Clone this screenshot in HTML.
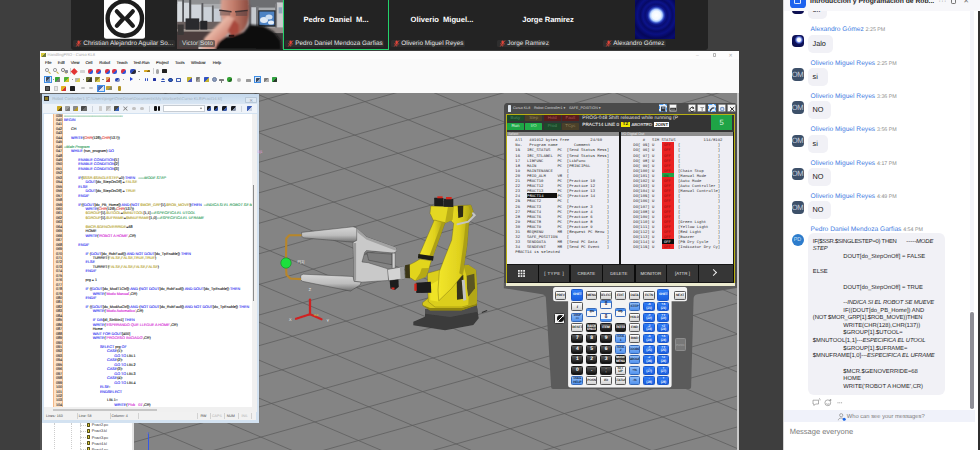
<!DOCTYPE html><html><head><meta charset="utf-8"><title>Zoom Meeting</title><style>*{box-sizing:border-box;margin:0;padding:0}
html,body{width:980px;height:450px;overflow:hidden;background:#3e3e3e}
body{font-family:"Liberation Sans",sans-serif;color:#222;text-rendering:geometricPrecision}
#root{position:relative;width:980px;height:450px;overflow:hidden;background:#3e3e3e}
.abs{position:absolute}
.nw{white-space:nowrap}
/* strip */
#strip{position:absolute;left:71px;top:0;width:637px;height:49.500px;background:#232323;border-radius:0 0 3px 3px;overflow:hidden}
.tile{position:absolute;top:0;width:106px;height:49.500px}
.tname{position:absolute;left:0;width:106px;top:14.5px;text-align:center;color:#fff;font-weight:bold;font-size:7.6px;white-space:nowrap;word-spacing:2px}
.tlab{position:absolute;left:2px;top:39.5px;height:7.5px;color:#e4e4e4;font-size:6.4px;line-height:7.5px;white-space:nowrap;padding:0 1.500px 0 10.300px;background:rgba(255,255,255,.05);border-radius:1.5px}
.mic{position:absolute;left:1.5px;top:0.5px;width:7px;height:7px}
/* shared screen */
#scr{position:absolute;left:40px;top:51px;width:699px;height:399px;background:#848484;overflow:hidden}
#chrome{position:absolute;left:0;top:0;width:100%;height:41.800px;background:#fafafa}
#ttl{position:absolute;left:0;top:0;width:100%;height:7.500px;background:#fdfdfd}
.menu{position:absolute;top:9.200px;font-size:4.100px;line-height:5px;color:#1c1c1c;white-space:nowrap;-webkit-text-stroke:.1px #1c1c1c}
.ic{position:absolute;width:4.600px;height:4.600px;border-radius:.6px;filter:blur(.3px)}
/* editor */
#ed{position:absolute;left:1.700px;top:42.600px;width:217.200px;height:329px;background:#d3e2f1;box-shadow:0 -.8px 1px rgba(0,0,0,.4)}
#edt{position:absolute;left:0;top:0;width:100%;height:10px;background:linear-gradient(#c4d8ec,#d9e6f3)}
#edtb{position:absolute;left:1.500px;top:10px;width:214px;height:9.600px;background:#eef3f9}
#code{position:absolute;left:2.600px;top:20.300px;width:207.800px;height:293.500px;background:#fff;overflow:hidden}
#gut{position:absolute;left:8.900px;top:0;width:10.300px;height:100%;background:#fde3c8;border-left:.7px solid #f3b98a;border-right:.7px solid #f3b98a}
.ln{position:absolute;left:0;height:4.450px;line-height:4.450px;font-size:3.700px;white-space:pre;color:#222;-webkit-text-stroke:.11px currentColor}
.ln i{font-style:normal}
.k{color:#2c2cf0}.s{color:#b4a22c}.m{color:#d324d3}.c{color:#2f9c5a;font-style:italic !important}.r{color:#e23232}
.num{position:absolute;left:11.700px;color:#333}
#edsb{position:absolute;left:2.600px;top:318.400px;width:212px;height:8.300px;background:#f1f1f1;font-size:3.600px;line-height:8.300px;color:#444}
#edsb span{position:absolute;top:0;white-space:nowrap}
#edsb b{position:absolute;top:1px;width:.6px;height:6.300px;background:#d2d2d2}
/* pendant */
#pn{position:absolute;left:465.400px;top:52.400px;width:231px;height:286px}
#pn:before{content:'';position:absolute;left:-1px;top:1px;width:233px;height:184px;background:#4b4b4b;border-radius:2px}
#pnt{position:absolute;left:0;top:0;width:231px;height:10.600px;background:#4b4b4b;border-radius:1.500px 1.500px 0 0;color:#d8d8d8;font-size:3.650px;line-height:10.600px;white-space:nowrap}
.pb{position:absolute;top:.9px;width:8.400px;height:8.200px;background:#f6f6f6;border-radius:1.300px;border:.5px solid #8a8a8a}
.pb.hl{border:.8px dashed #4f9df0;background:#e6effa}
#pscr{position:absolute;left:1px;top:10.600px;width:229px;height:171.800px;background:#161616;border:1px solid #b9b014}
.sb{position:absolute;width:16.600px;height:6.200px;font-size:4.300px;line-height:6.200px;text-align:center;white-space:nowrap;border-radius:.5px}
.pm{position:absolute;color:#f2f2f2;font-size:4.900px;line-height:6px;white-space:nowrap;font-weight:bold}
.pp{position:absolute;top:17.300px;height:131.300px;background:#eeeef4;overflow:hidden}
.ph{position:absolute;left:0;top:0;width:100%;height:4.200px;background:#8e8e8e;color:#ececec;font-size:3.600px;line-height:4.200px;white-space:nowrap;padding-left:.8px}
.pr{position:absolute;font-family:"Liberation Mono",monospace;font-size:3.920px;line-height:5.100px;height:5.100px;white-space:pre;color:#2a2a2a}
.sk{position:absolute;top:0;height:17.200px;background:#363636;color:#e4e4e4;font-size:4.400px;line-height:17.200px;text-align:center;white-space:nowrap}
.key{position:absolute;width:11.600px;height:8.800px;border-radius:1.300px;font-size:3.300px;line-height:3.300px;text-align:center;white-space:nowrap;overflow:hidden;display:flex;align-items:center;justify-content:center;flex-direction:column;font-weight:bold;letter-spacing:-.15px}
.kw{background:linear-gradient(#ffffff,#d4d4d4);border:.8px solid #585858;color:#1c1c1c}
.kd{background:linear-gradient(#5a5a5a,#101010);border:.6px solid #1c1c1c;color:#fff}
.kb{background:linear-gradient(#2f7cf6,#1a5fe0);border:.5px solid #1c58c8;color:#fff}
.kl{background:linear-gradient(#8fbdf8,#5393ee);border:.6px solid #3468b8;color:#0e223e}
/* chat */
#chat{position:absolute;left:783px;top:0;width:197px;height:450px;background:#fff;overflow:hidden}
.cn{position:absolute;left:27.600px;height:8px;line-height:8px;font-size:6.650px;color:#3f7de2;white-space:nowrap}
.cn span{font-size:5.300px;color:#8a8a8a;margin-left:1.800px}
.cb{position:absolute;left:24.800px;height:18.100px;border-radius:5px;background:#f1f1f6;font-size:7.300px;line-height:18.100px;padding:0 4.700px;color:#222;white-space:nowrap}
.av{position:absolute;left:8.700px;width:12.700px;height:12.500px;border-radius:3.800px;background:#3d5069;color:#c9d2df;font-size:7.600px;line-height:12.500px;padding-top:.6px;text-indent:-1px;text-align:center;overflow:hidden;letter-spacing:-.35px}
.avx{background:radial-gradient(circle at 58% 40%,#fff 0,#eef4ff 1.800px,#5a74d8 3px,#10145e 4.300px,#0a0c48 9px)}
.ml{position:absolute;left:29.800px;height:7.650px;line-height:7.650px;font-size:5.850px;color:#1e1e1e;white-space:pre}
.ml i{font-style:italic;letter-spacing:-.1px}
</style></head><body><div id="root">
<div id="strip">
<div class="tile" style="left:0"><svg class="abs" style="left:33px;top:-3px" width="41" height="42" viewBox="0 0 41 42"><rect x="0" y="0" width="41" height="41.700" rx="2.500" fill="#fff"/><circle cx="20.800" cy="21.500" r="17.200" fill="none" stroke="#1d1d1d" stroke-width="4.400"/><path d="M12.800 14.300L19.400 21.500L12.800 28.800M28.800 14.300L22.300 21.500L28.900 28.800" fill="none" stroke="#1d1d1d" stroke-width="4.200" stroke-linecap="round" stroke-linejoin="round"/></svg><div class="tlab" style=""><svg class="mic" viewBox="0 0 14 14"><rect x="5" y="1" width="4.4" height="7.5" rx="2.2" fill="#e0453a"/><path d="M3 6.5c0 5 8.4 5 8.400 0M7.200 10.500v2.500" stroke="#e0453a" stroke-width="1.300" fill="none"/><path d="M12 1L2.500 13" stroke="#e0453a" stroke-width="1.600"/></svg>Christian Alejandro Aguilar So...</div></div>
<div class="tile" style="left:106px;overflow:hidden" id="vid">
<svg class="abs" style="left:0;top:0" width="106" height="49" viewBox="0 0 106 49">
<defs><filter id="b1" x="-20%" y="-20%" width="140%" height="140%"><feGaussianBlur stdDeviation="1.1"/></filter>
<filter id="b2" x="-20%" y="-20%" width="140%" height="140%"><feGaussianBlur stdDeviation="0.5"/></filter>
<filter id="b3" x="-20%" y="-20%" width="140%" height="140%"><feGaussianBlur stdDeviation="2"/></filter>
<linearGradient id="skin" x1="0" y1="0" x2="1" y2="0"><stop offset="0" stop-color="#d9a292"/><stop offset=".45" stop-color="#c27c6b"/><stop offset="1" stop-color="#8a4a3e"/></linearGradient>
<linearGradient id="hand" x1="0" y1="0" x2="1" y2="1"><stop offset="0" stop-color="#f6e4dc"/><stop offset=".4" stop-color="#e9b9a8"/><stop offset="1" stop-color="#b04a3b"/></linearGradient></defs>
<rect width="106" height="49" fill="#a9abae"/>
<g filter="url(#b2)">
<rect x="0.0" y="0.0" width="71.6" height="3.9" fill="#8f9092" />
<rect x="71.6" y="0.0" width="34.3" height="7.6" fill="#6d6e71" />
<rect x="0.6" y="1.5" width="4.9" height="26.9" fill="#d6dade" />
<rect x="6.7" y="2.7" width="5.5" height="22.4" fill="#d3d7dc" />
<rect x="14.1" y="4.9" width="10.4" height="19.0" fill="#cfd4da" />
<rect x="26.3" y="7.1" width="8.6" height="15.6" fill="#cbd1d8" />
<rect x="36.7" y="8.6" width="7.0" height="12.9" fill="#c6ccd4" />
<rect x="5.3" y="0.0" width="1.6" height="29.4" fill="#4a4b4f" />
<rect x="12.2" y="0.0" width="2.0" height="28.8" fill="#47484c" />
<rect x="24.5" y="3.1" width="1.8" height="24.5" fill="#55565a" />
<rect x="34.9" y="5.5" width="1.8" height="19.6" fill="#5f6064" />
<rect x="0.0" y="21.8" width="44.7" height="10.0" fill="#6a605e" />
<rect x="0.0" y="29.1" width="42.2" height="2.9" fill="#a49994" />
<rect x="0.0" y="31.6" width="42.2" height="17.4" fill="#4b3e3c" />
<rect x="8.6" y="18.4" width="13.6" height="11.3" fill="#292a2e" />
<rect x="23.3" y="20.8" width="7.0" height="8.8" fill="#26272c" />
<rect x="0.6" y="24.5" width="6.1" height="10.4" fill="#3a3839" />
<rect x="72.9" y="7.3" width="8.1" height="18.6" fill="#c5c9ce" />
<rect x="71.6" y="4.9" width="2.7" height="24.5" fill="#68696d" />
<rect x="79.0" y="6.1" width="2.7" height="22.3" fill="#77787c" />
<rect x="99.8" y="2.4" width="6.1" height="25.1" fill="#c9cacd" />
<rect x="98.0" y="3.7" width="2.1" height="24.7" fill="#7b7c80" />
<rect x="101.6" y="7.3" width="3.7" height="6.1" fill="#8fa3b8" />
<rect x="81.2" y="10.3" width="17.4" height="16.4" fill="#24272d" />
<rect x="82.4" y="11.5" width="14.9" height="13.7" fill="#4d83c4" />
<ellipse cx="87" cy="20" rx="4" ry="3" fill="#dfe9f5"/><ellipse cx="92" cy="17" rx="3.500" ry="2.500" fill="#cfdff2"/><ellipse cx="94" cy="22.500" rx="3" ry="2" fill="#e6eef8"/>
<rect x="71.6" y="27.5" width="34.3" height="7.3" fill="#938b89" />
<rect x="79.0" y="33.1" width="26.9" height="15.9" fill="#3b3838" />
<rect x="21.4" y="40.2" width="18.4" height="8.8" fill="#c9c3c2" />
</g><g filter="url(#b1)">
<path d="M44.1 -1.2 L43.5 12.2 C44.7 23.3 50.8 32.4 59.4 33.7 C68.0 33.1 72.9 22.0 72.2 7.3 L71.6 -1.2 Z" fill="url(#skin)"/>
<polygon points="27.5,38.0 39.8,25.7 50.6,15.7 57.5,18.4 55.1,29.4 49.0,35.8 42.2,41.0 37.3,49.0 23.9,49.0" fill="url(#hand)" />
<polygon points="50.8,30.6 56.9,19.6 61.8,24.5 61.8,33.1 54.5,36.7" fill="#a94a3c" />
<polygon points="37.3,50.0 42.2,41.6 48.4,37.0 56.9,35.8 66.7,32.1 72.9,24.5 86.3,26.0 96.4,31.6 103.5,40.4 104.4,50.0" fill="#0e0e10" />
</g><g filter="url(#b2)">
<path d="M42.2 10.3 L54.5 11.8 M58.2 11.8 L70.7 10.5" stroke="#3c2e2e" stroke-width="1.500" fill="none"/>
<rect x="42.9" y="11.3" width="10.4" height="4.2" fill="#6d5553" opacity=".55"/>
<rect x="58.8" y="11.5" width="11.4" height="4.4" fill="#5d4644" opacity=".6"/>
<rect x="51.8" y="34.8" width="5.4" height="2.0" fill="#2a1414" />
</g></svg>
<div class="tlab" style="left:2px;padding-left:3px;background:rgba(70,70,70,.72);color:#ddd">Victor Soto</div>
</div>
<div class="tile" style="left:212px"><div class="abs" style="left:0;top:-1.500px;width:106px;height:51px;border:1.100px solid #23d16a"></div><div class="tname">Pedro Daniel M...</div><div class="tlab" style=""><svg class="mic" viewBox="0 0 14 14"><rect x="5" y="1" width="4.4" height="7.5" rx="2.2" fill="#e0453a"/><path d="M3 6.5c0 5 8.4 5 8.400 0M7.200 10.500v2.500" stroke="#e0453a" stroke-width="1.300" fill="none"/><path d="M12 1L2.500 13" stroke="#e0453a" stroke-width="1.600"/></svg>Pedro Daniel Mendoza Garfias</div></div>
<div class="tile" style="left:318px"><div class="tname">Oliverio Miguel...</div><div class="tlab" style=""><svg class="mic" viewBox="0 0 14 14"><rect x="5" y="1" width="4.4" height="7.5" rx="2.2" fill="#e0453a"/><path d="M3 6.5c0 5 8.4 5 8.400 0M7.200 10.500v2.500" stroke="#e0453a" stroke-width="1.300" fill="none"/><path d="M12 1L2.500 13" stroke="#e0453a" stroke-width="1.600"/></svg>Oliverio Miguel Reyes</div></div>
<div class="tile" style="left:424px"><div class="tname" style="word-spacing:.3px;letter-spacing:-.1px">Jorge Ramirez</div><div class="tlab" style=""><svg class="mic" viewBox="0 0 14 14"><rect x="5" y="1" width="4.4" height="7.5" rx="2.2" fill="#e0453a"/><path d="M3 6.5c0 5 8.4 5 8.400 0M7.200 10.500v2.500" stroke="#e0453a" stroke-width="1.300" fill="none"/><path d="M12 1L2.500 13" stroke="#e0453a" stroke-width="1.600"/></svg>Jorge Ramirez</div></div>
<div class="tile" style="left:530px"><div class="abs" style="left:34px;top:0;width:40px;height:39px;background:radial-gradient(circle at 21.300px 15.300px,#ffffff 0,#f0f7ff 4.300px,#b4d0ff 6px,#3a55c8 7.600px,#101a92 9px,#090d74 11px,#0c138a 13.500px,#070a66 16px,#0a1082 19px,#05075a 23px,#080c72 27px,#04054c 32px)"></div><div class="tlab" style=""><svg class="mic" viewBox="0 0 14 14"><rect x="5" y="1" width="4.4" height="7.5" rx="2.2" fill="#e0453a"/><path d="M3 6.5c0 5 8.4 5 8.400 0M7.200 10.500v2.500" stroke="#e0453a" stroke-width="1.300" fill="none"/><path d="M12 1L2.500 13" stroke="#e0453a" stroke-width="1.600"/></svg>Alexandro Gómez</div></div>
</div>
<div id="scr">
<svg class="abs" style="left:0;top:0" width="699.500" height="399" viewBox="40 51 699.500 399"><g stroke="#585858" stroke-width=".75" opacity=".9"><line x1="459.8" y1="-199.1" x2="-290.1" y2="16.6"/><line x1="550.5" y1="-194.8" x2="-294.3" y2="47.8"/><line x1="665.2" y1="-197.3" x2="-298.5" y2="79.1"/><line x1="780.3" y1="-199.9" x2="-279.4" y2="103.8"/><line x1="848.0" y1="-188.8" x2="-283.6" y2="135.1"/><line x1="892.0" y1="-170.8" x2="-287.8" y2="166.5"/><line x1="936.1" y1="-152.8" x2="-292.0" y2="197.8"/><line x1="980.2" y1="-134.8" x2="-296.2" y2="229.3"/><line x1="1024.4" y1="-116.7" x2="-277.1" y2="254.1"/><line x1="1068.7" y1="-98.6" x2="-281.3" y2="285.5"/><line x1="1113.0" y1="-80.4" x2="-285.5" y2="317.0"/><line x1="1157.5" y1="-62.3" x2="-243.0" y2="335.3"/><line x1="1202.0" y1="-44.1" x2="-200.4" y2="353.5"/><line x1="1246.6" y1="-25.8" x2="-157.8" y2="371.8"/><line x1="1291.3" y1="-7.6" x2="-115.0" y2="390.2"/><line x1="1287.6" y1="24.4" x2="-72.2" y2="408.6"/><line x1="1283.9" y1="56.5" x2="-29.3" y2="427.0"/><line x1="1280.2" y1="88.5" x2="13.7" y2="445.4"/><line x1="1276.5" y1="120.6" x2="56.7" y2="463.9"/><line x1="1297.1" y1="145.8" x2="99.8" y2="482.4"/><line x1="1293.4" y1="178.0" x2="143.1" y2="501.0"/><line x1="1289.7" y1="210.1" x2="186.3" y2="519.6"/><line x1="1286.0" y1="242.3" x2="229.7" y2="538.2"/><line x1="1282.3" y1="274.5" x2="273.1" y2="556.8"/><line x1="1278.6" y1="306.7" x2="316.7" y2="575.5"/><line x1="1299.2" y1="332.2" x2="360.3" y2="594.2"/><line x1="1295.5" y1="364.4" x2="403.9" y2="613.0"/><line x1="1291.8" y1="396.7" x2="447.7" y2="631.8"/><line x1="1288.1" y1="429.1" x2="491.5" y2="650.6"/><line x1="1284.4" y1="461.4" x2="535.4" y2="669.4"/><line x1="1280.7" y1="493.8" x2="579.4" y2="688.3"/><line x1="1277.0" y1="526.2" x2="623.5" y2="707.2"/><line x1="832.5" y1="-195.1" x2="1299.2" y2="-4.3"/><line x1="742.9" y1="-194.2" x2="1298.7" y2="33.5"/><line x1="653.5" y1="-193.2" x2="1298.1" y2="71.3"/><line x1="546.8" y1="-199.5" x2="1297.5" y2="109.2"/><line x1="458.0" y1="-198.5" x2="1296.9" y2="147.1"/><line x1="404.4" y1="-183.1" x2="1296.4" y2="185.0"/><line x1="350.9" y1="-167.7" x2="1295.8" y2="223.0"/><line x1="297.4" y1="-152.4" x2="1295.2" y2="261.0"/><line x1="244.0" y1="-137.0" x2="1294.6" y2="299.1"/><line x1="190.7" y1="-121.7" x2="1294.1" y2="337.2"/><line x1="137.4" y1="-106.4" x2="1293.5" y2="375.3"/><line x1="84.2" y1="-91.1" x2="1292.9" y2="413.5"/><line x1="31.1" y1="-75.8" x2="1292.3" y2="451.7"/><line x1="-22.0" y1="-60.5" x2="1291.7" y2="489.9"/><line x1="-75.0" y1="-45.3" x2="1291.2" y2="528.2"/><line x1="-128.0" y1="-30.0" x2="1272.3" y2="558.9"/><line x1="-180.9" y1="-14.8" x2="1217.0" y2="574.2"/><line x1="-233.7" y1="0.4" x2="1161.8" y2="589.5"/><line x1="-286.5" y1="15.5" x2="1106.6" y2="604.7"/><line x1="-287.8" y1="52.5" x2="1051.5" y2="620.0"/><line x1="-289.2" y1="89.4" x2="996.5" y2="635.2"/><line x1="-290.5" y1="126.4" x2="941.5" y2="650.4"/><line x1="-291.9" y1="163.4" x2="886.6" y2="665.6"/><line x1="-293.3" y1="200.5" x2="831.8" y2="680.8"/><line x1="-294.6" y1="237.6" x2="777.0" y2="695.9"/><line x1="-296.0" y1="274.7" x2="722.3" y2="711.1"/><line x1="-297.3" y1="311.9" x2="667.7" y2="726.2"/><line x1="-298.7" y1="349.1" x2="613.1" y2="741.3"/></g></svg>
<div id="chrome"><div id="ttl"><div class="abs" style="left:1.200px;top:1.800px;width:4.400px;height:4.400px;background:linear-gradient(135deg,#d8c93a 50%,#6f7a3a 50%)"></div><div class="abs nw" style="left:7.500px;top:1.300px;font-size:4.050px;line-height:5px;color:#a9a9a9">HandlingPRO - Curso KL8</div><div class="abs nw" style="left:656px;top:1.500px;font-size:5px;line-height:7px;color:#b5b5b5;letter-spacing:0">–</div><div class="abs" style="left:672.500px;top:2.300px;width:3.500px;height:3.300px;border:.6px solid #b5b5b5;border-radius:.8px"></div><div class="abs nw" style="left:688.500px;top:1.600px;font-size:5px;line-height:7px;color:#b0b0b0">✕</div></div>
<div class="menu" style="left:4.9px">File</div>
<div class="menu" style="left:17.7px">Edit</div>
<div class="menu" style="left:30.7px">View</div>
<div class="menu" style="left:45.4px">Cell</div>
<div class="menu" style="left:59.3px">Robot</div>
<div class="menu" style="left:76.6px">Teach</div>
<div class="menu" style="left:93.2px">Test-Run</div>
<div class="menu" style="left:116.0px">Project</div>
<div class="menu" style="left:134.9px">Tools</div>
<div class="menu" style="left:151.0px">Window</div>
<div class="menu" style="left:172.7px">Help</div>
<div class="ic" style="left:5.3px;top:17.2px;width:3.600px;height:3.600px;border-radius:50%;border:.8px solid #8a8a8a"></div>
<div class="ic" style="left:8.1px;top:20.9px;width:2.600px;height:1.200px;background:#c9b13e;transform:rotate(45deg)"></div>
<div class="ic" style="left:13.3px;top:17.2px;width:3.600px;height:3.600px;border-radius:50%;border:.8px solid #8a8a8a"></div>
<div class="ic" style="left:16.1px;top:20.9px;width:2.600px;height:1.200px;background:#c9b13e;transform:rotate(45deg)"></div>
<div class="ic" style="left:21.3px;top:17.2px;width:3.600px;height:3.600px;border-radius:50%;border:.8px solid #6f6f6f"></div>
<div class="ic" style="left:24.1px;top:20.9px;width:2.600px;height:1.200px;background:#c9b13e;transform:rotate(45deg)"></div>
<div class="ic" style="left:24.5px;top:19.3px;width:3.0px;height:3.0px;background:#8a8f99;"></div>
<div class="abs" style="left:29.800px;top:17px;width:.5px;height:6px;background:#d0d0d0"></div>
<div class="ic" style="left:32.2px;top:17.7px;width:4.6px;height:4.6px;background:#e23434;transform:rotate(45deg)"></div>
<div class="ic" style="left:39.9px;top:18.5px;width:5.0px;height:3.0px;background:#d4d4d4;"></div>
<div class="ic" style="left:47.9px;top:17.5px;width:5.0px;height:5.0px;background:linear-gradient(135deg,#d63246 52%,#3456d6 52%);border-radius:2px"></div>
<div class="ic" style="left:55.8px;top:17.5px;width:5.0px;height:5.0px;background:linear-gradient(135deg,#d63246 52%,#3456d6 52%);border-radius:2px"></div>
<div class="ic" style="left:64.5px;top:17.5px;width:5.0px;height:5.0px;background:linear-gradient(135deg,#d63246 52%,#3456d6 52%);border-radius:2px"></div>
<div class="ic" style="left:72.4px;top:17.5px;width:5.0px;height:5.0px;background:linear-gradient(135deg,#d63246 52%,#3456d6 52%);border-radius:2px"></div>
<div class="ic" style="left:81.0px;top:17.5px;width:5.0px;height:5.0px;background:linear-gradient(135deg,#d63246 52%,#3456d6 52%);border-radius:2px"></div>
<div class="ic" style="left:90.0px;top:17.5px;width:5.6px;height:5.0px;background:linear-gradient(135deg,#2b48b8 52%,#2a2a3a 52%);border-radius:2px"></div>
<div class="ic" style="left:98.2px;top:20.0px;width:1.6px;height:1.0px;background:#666;"></div>
<div class="ic" style="left:103.7px;top:18.9px;width:6.2px;height:2.6px;background:linear-gradient(135deg,#d9a822 52%,#8a6a10 52%);"></div>
<div class="abs" style="left:112.500px;top:17px;width:.5px;height:6px;background:#d0d0d0"></div>
<div class="ic" style="left:115.7px;top:17.5px;width:3.4px;height:5.0px;background:#a4a4a4;border-radius:1.600px"></div>
<div class="ic" style="left:122.0px;top:18.2px;width:5.4px;height:4.2px;background:#222;"></div>
<div class="abs" style="left:4.2px;top:25.2px;width:7.4px;height:7.200px;border:.7px solid #3f8ee6;background:rgba(120,175,245,.22)"></div>
<div class="ic" style="left:6.1px;top:26.2px;width:3.6px;height:5.2px;background:linear-gradient(135deg,#3b4a5e 52%,#6f8fb8 52%);"></div>
<div class="ic" style="left:12.7px;top:28.4px;width:1.4px;height:0.8px;background:#777;"></div>
<div class="ic" style="left:15.4px;top:26.3px;width:5.0px;height:5.0px;background:linear-gradient(135deg,#35a535 52%,#7a7a7a 52%);"></div>
<div class="ic" style="left:24.0px;top:26.3px;width:5.0px;height:5.0px;background:linear-gradient(135deg,#4fb235 52%,#cfc324 52%);"></div>
<div class="ic" style="left:31.6px;top:28.4px;width:1.4px;height:0.8px;background:#777;"></div>
<div class="ic" style="left:35.1px;top:26.5px;width:5.4px;height:4.6px;background:linear-gradient(135deg,#b7b7a6 52%,#d8cc50 52%);"></div>
<div class="ic" style="left:42.6px;top:28.4px;width:1.4px;height:0.8px;background:#777;"></div>
<div class="ic" style="left:46.3px;top:26.2px;width:5.4px;height:5.2px;background:linear-gradient(135deg,#6b6b31 52%,#3a3a2a 52%);"></div>
<div class="ic" style="left:55.0px;top:26.2px;width:5.4px;height:5.2px;background:linear-gradient(135deg,#8b8131 52%,#d2c444 52%);"></div>
<div class="ic" style="left:62.3px;top:28.4px;width:1.4px;height:0.8px;background:#777;"></div>
<div class="ic" style="left:66.4px;top:26.2px;width:3.8px;height:5.2px;background:linear-gradient(135deg,#e2a252 52%,#c43a3a 52%);"></div>
<div class="ic" style="left:74.9px;top:26.6px;width:5.4px;height:4.4px;background:linear-gradient(135deg,#2342b4 52%,#7a8ac0 52%);border-radius:2px"></div>
<div class="ic" style="left:83.1px;top:28.4px;width:1.4px;height:0.8px;background:#777;"></div>
<div class="abs" style="left:90px;top:26.400px;width:0;height:0;border-left:3.400px solid #2444d4;border-top:2.400px solid transparent;border-bottom:2.400px solid transparent"></div>
<div class="ic" style="left:98.6px;top:28.4px;width:1.4px;height:0.8px;background:#777;"></div>
<div class="ic" style="left:104.7px;top:27.1px;width:1.0px;height:3.4px;background:#3252c2;"></div>
<div class="ic" style="left:106.5px;top:27.1px;width:1.0px;height:3.4px;background:#3252c2;"></div>
<div class="ic" style="left:112.8px;top:27.1px;width:3.2px;height:3.4px;background:#2232a2;"></div>
<div class="ic" style="left:120.6px;top:29.5px;width:4.2px;height:1.2px;background:#3252b2;"></div>
<div class="abs" style="left:120.600px;top:26.600px;width:0;height:0;border-bottom:2.600px solid #3252b2;border-left:2.100px solid transparent;border-right:2.100px solid transparent"></div>
<div class="ic" style="left:128.4px;top:26.5px;width:4.6px;height:4.6px;background:#2f5fc1;border-radius:50%;border:1px solid #223f8f"></div>
<div class="ic" style="left:136.3px;top:26.5px;width:5.2px;height:4.6px;background:#f4f6fb;border:.8px solid #3f5fb1;border-top-width:1.600px"></div>
<div class="ic" style="left:146.7px;top:26.2px;width:5.2px;height:5.2px;background:linear-gradient(135deg,#c2b232 52%,#4252c2 52%);"></div>
<div class="ic" style="left:155.6px;top:26.2px;width:4.4px;height:5.2px;background:linear-gradient(135deg,#7a7a7a 52%,#a0a0a0 52%);"></div>
<div class="ic" style="left:163.5px;top:26.2px;width:5.0px;height:5.2px;background:linear-gradient(135deg,#3252c2 52%,#c2b232 52%);"></div>
<div class="ic" style="left:171.5px;top:26.3px;width:5.0px;height:5.0px;background:#8a9bbd;border-radius:50%;border:.8px solid #6a7a9a"></div>
<div class="ic" style="left:179.1px;top:27.7px;width:5.0px;height:2.2px;background:#7a7a7a;"></div>
<div class="ic" style="left:180.9px;top:28.8px;width:1.4px;height:3.0px;background:#7a7a7a;"></div>
<div class="ic" style="left:187.1px;top:26.3px;width:5.0px;height:5.0px;background:linear-gradient(135deg,#32a232 52%,#1f6f1f 52%);border-radius:2px"></div>
<div class="ic" style="left:196.9px;top:26.8px;width:4.0px;height:4.0px;background:#b9b9b9;border-radius:50%"></div>
<div class="ic" style="left:205.7px;top:27.7px;width:5.0px;height:3.4px;background:#9a9a9a;"></div>
<div class="abs" style="left:214.1px;top:25.2px;width:7.4px;height:7.200px;border:.7px solid #3f8ee6;background:rgba(120,175,245,.22)"></div>
<div class="ic" style="left:215.5px;top:26.5px;width:4.6px;height:4.6px;background:linear-gradient(135deg,#3b4a5e 52%,#8fa4c4 52%);"></div>
<div class="ic" style="left:223.5px;top:26.8px;width:5.0px;height:4.0px;background:linear-gradient(135deg,#7b7b7b 52%,#b0b0b0 52%);"></div>
<div class="ic" style="left:231.9px;top:26.3px;width:5.0px;height:5.0px;background:linear-gradient(135deg,#32a242 52%,#2a3a2a 52%);"></div>
<div class="ic" style="left:5.3px;top:34.6px;width:5.2px;height:5.2px;background:#5a5a5a;border:.8px solid #333"></div>
<div class="ic" style="left:13.9px;top:34.6px;width:4.0px;height:5.2px;background:#e6e6e6;border:.5px solid #c6c6c6"></div>
<div class="ic" style="left:21.3px;top:34.7px;width:5.2px;height:5.0px;background:linear-gradient(135deg,#e2b222 52%,#d43434 52%);"></div>
<div class="ic" style="left:30.0px;top:34.7px;width:5.0px;height:5.0px;background:#1f1f1f;"></div>
<div class="ic" style="left:41.1px;top:36.0px;width:4.0px;height:2.4px;background:#c4c4c4;border-radius:2px"></div>
<div class="ic" style="left:49.0px;top:36.0px;width:4.0px;height:2.4px;background:#c4c4c4;border-radius:2px"></div>
<div class="abs" style="left:56.9px;top:33.6px;width:8.2px;height:7.200px;border:.7px solid #3f8ee6;background:rgba(120,175,245,.22)"></div>
<div class="ic" style="left:58.2px;top:34.8px;width:5.6px;height:4.8px;background:linear-gradient(135deg,#4a6ab2 52%,#e0e6f0 52%);"></div>
<div class="ic" style="left:66.3px;top:35.0px;width:5.4px;height:4.4px;background:linear-gradient(135deg,#c2a232 52%,#8a8a6a 52%);"></div>
<div class="ic" style="left:78.4px;top:34.6px;width:2.4px;height:5.2px;background:#b29222;border-radius:1px"></div>
</div>
<div class="abs" style="left:697px;top:41.800px;width:2px;height:358px;background:#c9c9c9"></div>
<div class="abs" style="left:0;top:41.800px;width:2.200px;height:358px;background:#525252"></div>
<div id="ed"><div id="edt"><div class="abs" style="left:2px;top:2.200px;width:5px;height:5.500px;background:#8a7a20;border:.6px solid #333"></div><div class="abs nw" style="left:10.500px;top:2.300px;font-size:4.160px;line-height:5.500px;color:#a3b1c0">Robot Controller1 [C:\Users\jorge\OneDrive\Documents\My Workcells\Curso KL8\Pract14.kl]</div><div class="abs" style="left:203.800px;top:3px;width:11.200px;height:6.300px;background:#dde8f3;border:.5px solid #b9c9d9;border-radius:.8px;font-size:4.500px;line-height:5.300px;text-align:center;color:#8d9aa8">✕</div></div><div id="edtb">
<div class="ic" style="left:13.8px;top:2.3px;width:5.2px;height:5.2px;background:linear-gradient(135deg,#caa822 52%,#5a4a20 52%);"></div>
<div class="ic" style="left:22.1px;top:2.3px;width:5.2px;height:5.2px;background:linear-gradient(135deg,#9c9c9c 52%,#7a7a7a 52%);"></div>
<div class="ic" style="left:29.9px;top:2.3px;width:5.2px;height:5.2px;background:linear-gradient(135deg,#8a8a8a 52%,#b89a28 52%);"></div>
<div class="ic" style="left:38.3px;top:2.6px;width:5.6px;height:4.6px;background:linear-gradient(135deg,#484848 52%,#6a6a6a 52%);"></div>
<div class="ic" style="left:56.1px;top:2.4px;width:2.6px;height:5.0px;background:#cfcfcf;"></div>
<div class="ic" style="left:62.7px;top:2.3px;width:5.2px;height:5.2px;background:linear-gradient(135deg,#bdbdbd 52%,#d8d8d8 52%);"></div>
<div class="ic" style="left:71.1px;top:2.3px;width:5.2px;height:5.2px;background:linear-gradient(135deg,#4a4a42 52%,#3a62b8 52%);"></div>
<div class="ic" style="left:79.9px;top:2.6px;width:4.6px;height:4.6px;background:#808080;clip-path:polygon(0 12%,12% 0,50% 38%,88% 0,100% 12%,62% 50%,100% 88%,88% 100%,50% 62%,12% 100%,0 88%,38% 50%)"></div>
<div class="ic" style="left:88.4px;top:3.7px;width:4.0px;height:2.4px;background:#c2c2c2;border-radius:2px"></div>
<div class="ic" style="left:96.6px;top:3.7px;width:4.0px;height:2.4px;background:#c2c2c2;border-radius:2px"></div>
<div class="ic" style="left:111.3px;top:2.6px;width:2.8px;height:4.6px;background:#111;border-radius:1px"></div>
<div class="ic" style="left:114.5px;top:2.6px;width:2.8px;height:4.6px;background:#111;border-radius:1px"></div>
<div class="ic" style="left:163.4px;top:2.7px;width:4.8px;height:4.4px;background:linear-gradient(135deg,#16181e 52%,#2a4a9a 52%);border-radius:1.200px"></div>
<div class="ic" style="left:170.4px;top:2.7px;width:4.8px;height:4.4px;background:linear-gradient(135deg,#16181e 52%,#2a4a9a 52%);border-radius:1.200px"></div>
<div class="ic" style="left:178.9px;top:2.7px;width:4.8px;height:4.4px;background:linear-gradient(135deg,#16181e 52%,#3a5aa8 52%);border-radius:1.200px"></div>
<div class="ic" style="left:187.9px;top:2.7px;width:4.8px;height:4.4px;background:linear-gradient(135deg,#16181e 52%,#8a94a8 52%);border-radius:1.200px"></div>
<div class="ic" style="left:203.8px;top:2.3px;width:5.2px;height:5.2px;background:linear-gradient(135deg,#3a5ab2 52%,#c9d2e4 52%);"></div>
<div class="abs" style="left:49.1px;top:2px;width:.5px;height:6px;background:#cfd6de"></div>
<div class="abs" style="left:106.3px;top:2px;width:.5px;height:6px;background:#cfd6de"></div>
<div class="abs" style="left:198.3px;top:2px;width:.5px;height:6px;background:#cfd6de"></div>
<div class="abs" style="left:119.600px;top:1px;width:42px;height:7px;background:#fff;border:.5px solid #c6ccd3"></div>
<div class="abs" style="left:157px;top:3.600px;width:2px;height:2px;border-right:.5px solid #888;border-bottom:.5px solid #888;transform:rotate(45deg) scale(.8)"></div>
</div><div id="code"><div id="gut"></div>
<div class="ln num" style="top:-0.40px">039</div>
<div class="ln" style="top:-0.40px;left:19.6px"><i class="c">------------------------------------------------</i></div>
<div class="ln num" style="top:4.05px">040</div>
<div class="ln" style="top:4.05px;left:19.6px"><i class="k">BEGIN</i></div>
<div class="ln num" style="top:8.50px">041</div>
<div class="ln num" style="top:12.96px">042</div>
<div class="ln" style="top:12.96px;left:26.8px">CH</div>
<div class="ln num" style="top:17.41px">043</div>
<div class="ln num" style="top:21.86px">044</div>
<div class="ln" style="top:21.86px;left:26.8px"><i class="k">WRITE</i>(<i class="r">CHR</i>(128),<i class="r">CHR</i>(137))</div>
<div class="ln num" style="top:26.31px">045</div>
<div class="ln num" style="top:30.76px">046</div>
<div class="ln" style="top:30.76px;left:19.6px"><i class="c">--Main Program</i></div>
<div class="ln num" style="top:35.22px">047</div>
<div class="ln" style="top:35.22px;left:26.8px"><i class="k">WHILE</i> (run_program) <i class="k">DO</i></div>
<div class="ln num" style="top:39.67px">048</div>
<div class="ln num" style="top:44.12px">049</div>
<div class="ln" style="top:44.12px;left:34.0px"><i class="k">ENABLE CONDITION</i>[1]</div>
<div class="ln num" style="top:48.57px">050</div>
<div class="ln" style="top:48.57px;left:34.0px"><i class="k">ENABLE CONDITION</i>[2]</div>
<div class="ln num" style="top:53.02px">051</div>
<div class="ln" style="top:53.02px;left:34.0px"><i class="k">ENABLE CONDITION</i>[3]</div>
<div class="ln num" style="top:57.48px">052</div>
<div class="ln num" style="top:61.93px">053</div>
<div class="ln" style="top:61.93px;left:34.0px"><i class="k">IF</i>(<i class="s">$SSR.$SINGLESTEP</i>=0) <i class="k">THEN</i>   <i class="c">-----MODE STEP</i></div>
<div class="ln num" style="top:66.38px">054</div>
<div class="ln" style="top:66.38px;left:41.2px"><i class="k">DOUT</i>[do_StepOnOff] = <i class="s">FALSE</i></div>
<div class="ln num" style="top:70.83px">055</div>
<div class="ln" style="top:70.83px;left:34.0px"><i class="k">ELSE</i></div>
<div class="ln num" style="top:75.28px">056</div>
<div class="ln" style="top:75.28px;left:41.2px"><i class="k">DOUT</i>[do_StepOnOff] = <i class="s">TRUE</i></div>
<div class="ln num" style="top:79.74px">057</div>
<div class="ln" style="top:79.74px;left:34.0px"><i class="k">ENDIF</i></div>
<div class="ln num" style="top:84.19px">058</div>
<div class="ln num" style="top:88.64px">059</div>
<div class="ln" style="top:88.64px;left:34.0px"><i class="k">IF</i>((<i class="k">DOUT</i>[do_PB_Home]) <i class="k">AND</i> (<i class="k">NOT</i> <i class="s">$MOR_GRP</i>[1].<i class="s">$ROB_MOVE</i>))<i class="k">THEN</i>  <i class="c">--INDICA SI EL ROBOT SE MUEVE</i></div>
<div class="ln num" style="top:93.09px">060</div>
<div class="ln" style="top:93.09px;left:41.2px"><i class="k">WRITE</i>(<i class="r">CHR</i>(128),<i class="r">CHR</i>(137))</div>
<div class="ln num" style="top:97.54px">061</div>
<div class="ln" style="top:97.54px;left:41.2px"><i class="s">$GROUP</i>[1].<i class="s">$UTOOL</i>=<i class="s">$MNUTOOL</i>[1,1]<i class="c">---ESPECIFICA EL UTOOL</i></div>
<div class="ln num" style="top:102.00px">062</div>
<div class="ln" style="top:102.00px;left:41.2px"><i class="s">$GROUP</i>[1].<i class="s">$UFRAME</i>=<i class="s">$MNUFRAME</i>[1,0]<i class="c">---ESPECIFICA EL UFRAME</i></div>
<div class="ln num" style="top:106.45px">063</div>
<div class="ln num" style="top:110.90px">064</div>
<div class="ln" style="top:110.90px;left:41.2px"><i class="s">$MCR.$GENOVERRIDE</i>=68</div>
<div class="ln num" style="top:115.35px">065</div>
<div class="ln" style="top:115.35px;left:41.2px">HOME</div>
<div class="ln num" style="top:119.80px">066</div>
<div class="ln" style="top:119.80px;left:41.2px"><i class="k">WRITE</i>(<i class="m">'ROBOT A HOME'</i>,CR)</div>
<div class="ln num" style="top:124.26px">067</div>
<div class="ln num" style="top:128.71px">068</div>
<div class="ln" style="top:128.71px;left:34.0px"><i class="k">ENDIF</i></div>
<div class="ln num" style="top:133.16px">069</div>
<div class="ln num" style="top:137.61px">070</div>
<div class="ln" style="top:137.61px;left:41.2px"><i class="k">IF</i> (<i class="k">DOUT</i>[do_RobFault]) <i class="k">AND NOT DOUT</i>[do_TpEnable]) <i class="k">THEN</i></div>
<div class="ln num" style="top:142.06px">071</div>
<div class="ln" style="top:142.06px;left:48.4px">TURRET(<i class="s">FALSE,FALSE,TRUE,TRUE</i>)</div>
<div class="ln num" style="top:146.52px">072</div>
<div class="ln" style="top:146.52px;left:41.2px"><i class="k">ELSE</i></div>
<div class="ln num" style="top:150.97px">073</div>
<div class="ln" style="top:150.97px;left:48.4px">TURRET(<i class="s">FALSE,FALSE,FALSE,FALSE</i>)</div>
<div class="ln num" style="top:155.42px">074</div>
<div class="ln" style="top:155.42px;left:41.2px"><i class="k">ENDIF</i></div>
<div class="ln num" style="top:159.87px">075</div>
<div class="ln num" style="top:164.32px">076</div>
<div class="ln" style="top:164.32px;left:41.2px">prg = 1</div>
<div class="ln num" style="top:168.78px">077</div>
<div class="ln num" style="top:173.23px">078</div>
<div class="ln" style="top:173.23px;left:41.2px"><i class="k">IF</i> ((<i class="k">DOUT</i>[do_ModT1Ctrl]) <i class="k">AND</i> (<i class="k">NOT DOUT</i>[do_RobFault]) <i class="k">AND DOUT</i>[do_TpEnable]) <i class="k">THEN</i></div>
<div class="ln num" style="top:177.68px">079</div>
<div class="ln" style="top:177.68px;left:48.4px"><i class="k">WRITE</i>(<i class="m">'Modo Manual'</i>,CR)</div>
<div class="ln num" style="top:182.13px">080</div>
<div class="ln" style="top:182.13px;left:41.2px"><i class="k">ENDIF</i></div>
<div class="ln num" style="top:186.58px">081</div>
<div class="ln num" style="top:191.04px">082</div>
<div class="ln" style="top:191.04px;left:41.2px"><i class="k">IF</i> ((<i class="k">DOUT</i>[do_ModAuCtrl]) <i class="k">AND</i> (<i class="k">NOT DOUT</i>[do_RobFault]) <i class="k">AND NOT DOUT</i>[do_TpEnable]) <i class="k">THEN</i></div>
<div class="ln num" style="top:195.49px">083</div>
<div class="ln" style="top:195.49px;left:48.4px"><i class="k">WRITE</i>(<i class="m">'Modo Automatico'</i>,CR)</div>
<div class="ln num" style="top:199.94px">084</div>
<div class="ln num" style="top:204.39px">085</div>
<div class="ln" style="top:204.39px;left:48.4px"><i class="k">IF DIN</i>[di_StrtBtn1] <i class="k">THEN</i></div>
<div class="ln num" style="top:208.84px">086</div>
<div class="ln" style="top:208.84px;left:48.4px"><i class="k">WRITE</i>(<i class="m">'ESPERANDO QUE LLEGUE A HOME'</i>,CR)</div>
<div class="ln num" style="top:213.30px">087</div>
<div class="ln" style="top:213.30px;left:48.4px">Home</div>
<div class="ln num" style="top:217.75px">088</div>
<div class="ln" style="top:217.75px;left:48.4px"><i class="k">WAIT FOR DOUT</i>[400]</div>
<div class="ln num" style="top:222.20px">089</div>
<div class="ln" style="top:222.20px;left:48.4px"><i class="k">WRITE</i>(<i class="m">'PROCESO INICIADO'</i>,CR)</div>
<div class="ln num" style="top:226.65px">090</div>
<div class="ln num" style="top:231.10px">091</div>
<div class="ln" style="top:231.10px;left:55.6px"><i class="k">SELECT</i> prg <i class="k">OF</i></div>
<div class="ln num" style="top:235.56px">092</div>
<div class="ln" style="top:235.56px;left:62.8px"><i class="k">CASE</i>(1):</div>
<div class="ln num" style="top:240.01px">093</div>
<div class="ln" style="top:240.01px;left:70.0px"><i class="k">GO TO</i> LBL1</div>
<div class="ln num" style="top:244.46px">094</div>
<div class="ln" style="top:244.46px;left:62.8px"><i class="k">CASE</i>(2):</div>
<div class="ln num" style="top:248.91px">095</div>
<div class="ln" style="top:248.91px;left:70.0px"><i class="k">GO TO</i> LBL2</div>
<div class="ln num" style="top:253.36px">096</div>
<div class="ln" style="top:253.36px;left:62.8px"><i class="k">CASE</i>(3):</div>
<div class="ln num" style="top:257.82px">097</div>
<div class="ln" style="top:257.82px;left:70.0px"><i class="k">GO TO</i> LBL3</div>
<div class="ln num" style="top:262.27px">098</div>
<div class="ln" style="top:262.27px;left:62.8px"><i class="k">CASE</i>(4):</div>
<div class="ln num" style="top:266.72px">099</div>
<div class="ln" style="top:266.72px;left:70.0px"><i class="k">GO TO</i> LBL4</div>
<div class="ln num" style="top:271.17px">100</div>
<div class="ln" style="top:271.17px;left:55.6px"><i class="k">ELSE</i>:</div>
<div class="ln num" style="top:275.62px">101</div>
<div class="ln" style="top:275.62px;left:55.6px"><i class="k">ENDSELECT</i></div>
<div class="ln num" style="top:280.08px">102</div>
<div class="ln num" style="top:284.53px">103</div>
<div class="ln" style="top:284.53px;left:62.8px">LBL1::</div>
<div class="ln num" style="top:288.98px">104</div>
<div class="ln" style="top:288.98px;left:70.0px"><i class="k">WRITE</i>(<i class="m">'Pick   01'</i>,CR)</div>
</div>
<div class="abs" style="left:210.400px;top:20.300px;width:4.500px;height:293.500px;background:#f0f0f0"></div>
<div class="abs" style="left:211.300px;top:91.400px;width:1px;height:116px;background:#8c8c8c"></div>
<div class="abs" style="left:2.600px;top:313.800px;width:212.300px;height:4.600px;background:#f0f0f0"></div>
<div class="abs" style="left:11.600px;top:315px;width:104px;height:2px;background:#c6c6c6"></div>
<div id="edsb"><span style="left:1.800px">Lines: 160</span><b style="left:32.800px"></b><span style="left:34.500px">Line: 58</span><b style="left:65.500px"></b><span style="left:67.100px">Column: 4</span><b style="left:94.200px"></b><b style="left:152.5px"></b><b style="left:165.7px"></b><b style="left:179.6px"></b><b style="left:193.3px"></b><b style="left:207.1px"></b><span style="left:152.5px;width:13.2px;text-align:center;color:#444">RW</span><span style="left:165.7px;width:13.9px;text-align:center;color:#b0b0b0">CAPS</span><span style="left:179.6px;width:13.7px;text-align:center;color:#444">NUM</span><span style="left:193.3px;width:13.8px;text-align:center;color:#b0b0b0">INS</span></div>
</div>
<div class="abs" style="left:1.700px;top:371.600px;width:90.500px;height:28px;background:#fff"></div>
<div class="abs" style="left:92.200px;top:371.600px;width:2px;height:28px;background:#e4e4e4"></div>
<div class="abs" style="left:14.3px;top:371.600px;width:0;height:28px;border-left:.5px dotted #cdcdcd"></div>
<div class="abs" style="left:31.1px;top:371.600px;width:0;height:28px;border-left:.5px dotted #cdcdcd"></div>
<div class="abs" style="left:39.8px;top:371.600px;width:0;height:28px;border-left:.5px dotted #cdcdcd"></div>
<div class="abs" style="left:46.600px;top:371.6px;width:3.600px;height:4.400px;background:#e0cf38;border:.45px solid #55501a;border-radius:.4px"></div>
<div class="abs" style="left:40px;top:373.8px;width:6px;height:0;border-top:.5px dotted #cdcdcd"></div>
<div class="abs nw" style="left:51.800px;top:371.3px;font-size:3.900px;line-height:5px;color:#333">Pract2.pc</div>
<div class="abs" style="left:46.600px;top:377.7px;width:3.600px;height:4.400px;background:#e0cf38;border:.45px solid #55501a;border-radius:.4px"></div>
<div class="abs" style="left:40px;top:379.9px;width:6px;height:0;border-top:.5px dotted #cdcdcd"></div>
<div class="abs nw" style="left:51.800px;top:377.4px;font-size:3.900px;line-height:5px;color:#333">Pract3.kl</div>
<div class="abs" style="left:46.600px;top:383.8px;width:3.600px;height:4.400px;background:#e0cf38;border:.45px solid #55501a;border-radius:.4px"></div>
<div class="abs" style="left:40px;top:386.0px;width:6px;height:0;border-top:.5px dotted #cdcdcd"></div>
<div class="abs nw" style="left:51.800px;top:383.5px;font-size:3.900px;line-height:5px;color:#333">Pract3.pc</div>
<div class="abs" style="left:46.600px;top:389.9px;width:3.600px;height:4.400px;background:#e0cf38;border:.45px solid #55501a;border-radius:.4px"></div>
<div class="abs" style="left:40px;top:392.1px;width:6px;height:0;border-top:.5px dotted #cdcdcd"></div>
<div class="abs nw" style="left:51.800px;top:389.6px;font-size:3.900px;line-height:5px;color:#333">Pract4.kl</div>
<div class="abs" style="left:46.600px;top:396.0px;width:3.600px;height:4.400px;background:#e0cf38;border:.45px solid #55501a;border-radius:.4px"></div>
<div class="abs" style="left:40px;top:398.2px;width:6px;height:0;border-top:.5px dotted #cdcdcd"></div>
<div class="abs nw" style="left:51.800px;top:395.7px;font-size:3.900px;line-height:5px;color:#333">Pract4.pc</div>
<div class="abs" style="left:108px;top:383px;width:.8px;height:16px;background:#3558e8"></div>
<div class="abs nw" style="left:107.200px;top:379.500px;font-size:3.500px;line-height:4px;color:#3558e8">z</div>
<svg class="abs" style="left:0;top:0" width="699.500" height="399" viewBox="40 51 699.500 399"><defs><filter id="rb" x="-5%" y="-5%" width="110%" height="110%"><feGaussianBlur stdDeviation="0.35"/></filter><linearGradient id="jaw" x1="0" y1="0" x2="0" y2="1"><stop offset="0" stop-color="#d6d6d6"/><stop offset=".55" stop-color="#bdbdbd"/><stop offset="1" stop-color="#6e6e6e"/></linearGradient><linearGradient id="yel" x1="0" y1="0" x2="1" y2="0"><stop offset="0" stop-color="#f2e62a"/><stop offset=".6" stop-color="#e0d21e"/><stop offset="1" stop-color="#a89c14"/></linearGradient></defs><g filter="url(#rb)"><polygon points="425.0,309.2 476.7,305.0 478.7,318.3 473.3,325.0 445.0,330.3 413.3,325.3 413.3,321.7 425.0,316.7" fill="#3a3a3a" /><polygon points="425.0,309.2 476.7,305.0 477.7,311.7 450.0,317.0 425.0,313.7" fill="#4e4e4e" /><polygon points="481.7,312.0 487.0,310.0 487.3,311.0 482.0,313.0" fill="#2a2a2a" /><polygon points="422.5,302.7 428.3,298.0 475.0,299.7 477.0,305.0 461.7,310.3 430.0,310.3 422.5,305.3" fill="#d6c81a" stroke="#6e6610" stroke-width=".4" stroke-linejoin="round"/><polygon points="422.5,305.0 430.0,308.0 461.7,308.0 477.0,303.7 477.0,305.0 461.7,310.3 430.0,310.3 422.5,305.3" fill="#8f8410" /><polygon points="427.5,273.3 440.0,269.7 455.0,266.7 468.3,265.0 475.8,270.0 477.0,288.3 476.7,303.3 461.7,307.0 435.0,307.0 428.3,301.7 427.7,288.3" fill="#dccf1c" stroke="#6e6610" stroke-width=".4" stroke-linejoin="round"/><polygon points="463.3,265.3 468.3,265.0 475.8,270.0 477.0,288.3 476.7,303.3 468.3,305.0 469.2,285.0" fill="#b3a716" /><polygon points="456.7,276.7 463.3,275.0 463.7,298.7 457.0,299.7" fill="#34321a" /><polygon points="466.7,275.7 474.3,273.7 475.0,288.3 468.3,296.7 467.0,288.3" fill="#5a5420" /><polygon points="461.7,280.0 464.7,279.7 466.3,300.0 463.3,300.7" fill="#c2c2c2" /><polygon points="430.0,285.0 438.7,280.0 438.7,301.7 430.3,300.3" fill="#efe326" /><polygon points="415.8,282.7 430.8,281.7 431.3,292.7 416.3,293.0" fill="#1b1b1b" /><polygon points="414.3,283.7 416.7,283.3 416.7,291.0 414.3,290.7" fill="#d4281e" /><polygon points="452.5,206.0 470.8,205.0 473.3,211.7 468.7,223.3 467.0,245.0 462.5,275.0 451.7,288.3 438.7,300.8 438.0,290.0 439.3,271.7 445.0,256.7 451.7,240.0 453.7,223.3 450.0,220.0" fill="url(#yel)" stroke="#6e6610" stroke-width=".4" stroke-linejoin="round"/><polygon points="468.7,223.3 473.3,211.7 470.8,205.0 468.3,205.3 470.3,211.7 465.7,223.3 463.3,245.0 459.3,273.3 462.5,275.0 467.0,245.0" fill="#aca014" /><polygon points="457.7,206.0 463.3,205.7 463.0,216.7 458.3,218.0" fill="#2e2c16" /><polyline points="457.5,224.3 468.3,221.7 474.7,215.3 473.0,213.3" fill="none" stroke="#c4c4c4" stroke-width="2" stroke-linecap="round"/><polygon points="430.8,206.0 453.3,206.7 452.0,220.0 443.7,223.7 433.3,220.3 430.0,213.3" fill="#e4d820" stroke="#6e6610" stroke-width=".4" stroke-linejoin="round"/><polygon points="448.0,206.7 453.3,206.7 452.0,220.0 445.0,223.0" fill="#b9ad18" /><polygon points="434.2,197.7 443.3,198.0 443.7,206.3 434.3,206.0" fill="#1a1a1a" /><polygon points="443.7,198.7 453.3,199.0 453.3,207.0 443.7,206.7" fill="#222" /><polygon points="437.3,196.3 442.7,196.3 442.7,198.3 437.3,198.3" fill="#d4281e" /><polygon points="446.0,197.0 451.7,197.0 451.7,199.3 446.0,199.3" fill="#d4281e" /><polygon points="434.3,220.0 445.0,222.7 432.7,256.7 419.3,255.0" fill="url(#yel)" stroke="#6e6610" stroke-width=".4" stroke-linejoin="round"/><polygon points="442.0,222.0 445.0,222.7 432.7,256.7 429.3,256.3" fill="#aca014" /><polygon points="418.3,254.0 433.7,256.3 433.0,260.7 418.0,258.3" fill="#1c1c12" /><polygon points="420.0,259.0 431.3,260.7 429.2,268.0 425.8,276.7 415.0,280.8 408.7,276.7 409.0,265.0 415.0,262.0" fill="#e2d51e" stroke="#6e6610" stroke-width=".4" stroke-linejoin="round"/><polygon points="421.7,268.3 429.2,268.0 425.8,276.7 415.0,280.8 420.0,273.3" fill="#b5a916" /><polygon points="405.0,265.3 409.7,264.3 410.0,278.3 405.3,278.0" fill="#3a3616" /><polygon points="356.7,228.0 366.4,236.9 395.8,247.6 396.7,251.1 394.0,253.1 366.4,250.6 364.7,252.4 362.0,262.0 368.2,262.7 388.7,269.1 388.7,280.4 361.1,282.2 354.0,281.3 353.1,242.2 353.1,226.8" fill="#c9c9c9" stroke="#3c3c3c" stroke-width=".45" stroke-linejoin="round"/><polygon points="356.7,228.0 366.4,236.9 395.8,247.6 396.7,251.1 366.4,239.6 357.6,232.4" fill="#a2a2a2" /><polygon points="354.0,243.1 356.1,243.1 356.1,280.4 354.0,281.3" fill="#9a9a9a" /><polygon points="366.8,252.4 392.0,254.1 392.0,264.8 368.6,260.2" fill="#7c7c7c" stroke="#3c3c3c" stroke-width=".45" stroke-linejoin="round"/><polygon points="392.2,253.1 395.2,253.1 395.2,268.4 392.2,268.4" fill="#cfcfcf" stroke="#3c3c3c" stroke-width=".45" stroke-linejoin="round"/><polygon points="387.4,269.4 403.8,266.6 404.7,278.7 388.7,280.8" fill="#d3d3d3" stroke="#3c3c3c" stroke-width=".45" stroke-linejoin="round"/><polygon points="399.9,267.3 403.8,266.6 404.7,278.7 400.6,279.4" fill="#9d9d9d" /><polygon points="301.6,232.4 353.1,226.8 356.7,228.0 356.7,240.4 353.1,242.2 303.3,237.8 301.6,236.0" fill="url(#jaw)" stroke="#3c3c3c" stroke-width=".45" stroke-linejoin="round"/><polygon points="300.7,275.5 303.3,274.2 353.1,276.5 354.0,281.3 361.1,282.2 360.2,284.9 350.4,291.1 302.4,281.3 300.7,279.6" fill="url(#jaw)" stroke="#3c3c3c" stroke-width=".45" stroke-linejoin="round"/><polygon points="389.6,280.4 398.4,279.6 398.8,286.7 394.9,289.9 390.4,288.6" fill="#1c1c1c" /><polygon points="391.3,287.6 394.5,287.6 394.5,289.7 391.7,289.3" fill="#d02a20" /><polyline points="301.5,235.3 289.2,235.3 286.3,238.5 286.0,259.0" fill="none" stroke="#b8862a" stroke-width="2.100"/><polyline points="286.0,267.3 286.5,274.8 290.3,278.5 301.0,279.1" fill="none" stroke="#b8862a" stroke-width="2.100"/><circle cx="286" cy="263" r="5.200" fill="#1fe03e" stroke="#0d8a22" stroke-width=".6"/><g stroke="#cf2222" stroke-width="2.200" stroke-linecap="round"><line x1="310" y1="314.300" x2="310" y2="299.500"/><line x1="310" y1="314.300" x2="296" y2="318.800"/><line x1="310" y1="314.300" x2="321.500" y2="319.300"/></g></g><g font-family="Liberation Sans, sans-serif" font-size="3.900" fill="#f0f0f0"><text x="297.500" y="262.500">P[1]</text><text x="308.800" y="290.500">Z</text><text x="289" y="321">X</text><text x="326.500" y="322">Y</text><text x="314" y="315.500" fill="#e8d820" font-size="3">0,0</text><text x="257.500" y="153.200" fill="#e9a0e6" font-size="3.600">0]1</text></g></svg>
<div id="pn">
<svg class="abs" style="left:0;top:180px;overflow:visible" width="233" height="110" viewBox="505.400 283.400 233 110"><path d="M504.200 283.400H737.200V288.500L698 294.700Q694 295.300 694 299L691.500 387.500Q691.500 389.500 689.500 389.500H553.500Q551.500 389.500 551.500 387.500L546.300 299Q546.300 295.300 542.500 294.700L504.200 288.600Z" fill="#5b5b5b"/><path d="M556 287.300H685Q687.500 287.300 687.500 289.800V299.200Q687.500 301.700 685 301.700H672V385.500Q672 388 669.500 388H571Q568.500 388 568.500 385.500V301.700H556Q553.500 301.700 553.500 299.200V289.800Q553.500 287.300 556 287.300Z" fill="#f3f3f3"/></svg>
<div id="pnt"><span class="abs" style="left:2.300px;top:2px;width:3px;height:6.500px;background:#dfe6ee;border-radius:.6px"></span><span class="abs" style="left:7.600px;top:0">Curso KL8</span><span class="abs" style="left:28.500px;top:0">Robot Controller1 ▾</span><span class="abs" style="left:63.500px;top:0">SAFE_POSITION ▾</span>
<span class="pb hl" style="left:153.5px"><svg class="abs" style="left:-.7px;top:-.6px" width="8.400" height="8.200" viewBox="0 0 8.400 8.200"><rect x="2" y="1.600" width="4.400" height="5" fill="#2d3440"/><rect x="2.800" y="2.400" width="2.800" height="1.200" fill="#9fb2c8"/></svg></span>
<span class="pb" style="left:163.5px"><svg class="abs" style="left:-.7px;top:-.6px" width="8.400" height="8.200" viewBox="0 0 8.400 8.200"><rect x="1.300" y="2.800" width="5.800" height="2.800" fill="#1c1c1c"/><rect x="2" y="3.800" width="4.400" height=".6" fill="#ddd"/></svg></span>
<span class="pb" style="left:182.6px"><svg class="abs" style="left:-.7px;top:-.6px" width="8.400" height="8.200" viewBox="0 0 8.400 8.200"><path d="M5.900 3.200A2.200 2.200 0 1 0 6.200 5.200" fill="none" stroke="#222" stroke-width=".9"/><path d="M4.600 1.600L6.400 3.200L4.400 4z" fill="#222"/></svg></span>
<span class="pb" style="left:191.8px"><svg class="abs" style="left:-.7px;top:-.6px" width="8.400" height="8.200" viewBox="0 0 8.400 8.200"><path d="M2.400 2h3.600v1.100h-1.200v3.400h-1.200v-3.400h-1.200z" fill="#9a9a9a"/></svg></span>
<span class="pb hl" style="left:202.5px"><svg class="abs" style="left:-.7px;top:-.6px" width="8.400" height="8.200" viewBox="0 0 8.400 8.200"><path d="M1.800 6.600V4.800L4 2.600L6.400 2.200V3.400L4.600 3.800L3.200 5.200V6.600z" fill="#2e3a4c"/></svg></span>
<span class="pb" style="left:212.2px"><svg class="abs" style="left:-.7px;top:-.6px" width="8.400" height="8.200" viewBox="0 0 8.400 8.200"><circle cx="4.200" cy="4.100" r="2.300" fill="#7a97c4"/><circle cx="4.200" cy="4.100" r="1.100" fill="#dfe8f4"/></svg></span>
<span class="pb" style="left:221.9px"><svg class="abs" style="left:-.7px;top:-.6px" width="8.400" height="8.200" viewBox="0 0 8.400 8.200"><path d="M2.200 2.100L6.200 6.100M6.200 2.100L2.200 6.100" stroke="#1a1a1a" stroke-width="1"/></svg></span>
</div>
<div id="pscr">
<div class="abs" style="left:0;top:0;width:227px;height:17.300px;background:#343434"></div>
<div class="sb" style="left:-0.3px;top:0.1px;background:#1d4a2b;color:#4f8a63">Busy</div>
<div class="sb" style="left:18.0px;top:0.1px;background:#4a4029;color:#94825c">Step</div>
<div class="sb" style="left:36.6px;top:0.1px;background:#581c1c;color:#a85656">Hold</div>
<div class="sb" style="left:54.7px;top:0.1px;background:#581c1c;color:#a85656">Fault</div>
<div class="sb" style="left:-0.3px;top:8.2px;background:#1ea646;color:#eafff0;height:6.700px;line-height:6.700px">Run</div>
<div class="sb" style="left:18.0px;top:8.2px;background:#22ae4a;color:#c9f5d5;height:6.700px;line-height:6.700px">I/O</div>
<div class="sb" style="left:36.6px;top:8.2px;background:#1d4a2b;color:#4f8a63;height:6.700px;line-height:6.700px">Prod</div>
<div class="sb" style="left:54.7px;top:8.2px;background:#4a4029;color:#94825c;height:6.700px;line-height:6.700px">TCyc</div>
<div class="pm" style="left:74.9px;top:1.2px;font-weight:normal;letter-spacing:.1px;color:#e6e6e6">PROG-048 Shift released while running (P</div>
<div class="pm" style="left:74.9px;top:7.3px;font-size:4.700px;font-weight:normal;-webkit-text-stroke:.06px #f2f2f2">PRACT14 LINE 0</div>
<div class="pm" style="left:113.3px;top:6.8px;width:9.400px;height:5.200px;line-height:5.200px;background:#f0e800;color:#222;text-align:center">T2</div>
<div class="pm" style="left:124.0px;top:7.2px;font-size:4.300px;font-weight:normal;-webkit-text-stroke:.06px #f2f2f2">ABORTED</div>
<div class="pm" style="left:146.8px;top:6.7px;width:15px;height:5.400px;line-height:5.400px;background:#fff;color:#222;text-align:center;font-size:4.300px">JOINT</div>
<div class="abs" style="left:203.4px;top:-0.3px;width:21.700px;height:15.200px;background:#1fa446;color:#e6f7e9;font-size:7.600px;line-height:15.600px;text-align:center">5</div>
<div class="pp" style="left:0;width:111.200px"><div class="ph">Select</div>
<div class="pr" style="left:7.9px;top:6.95px;">All   491912 bytes free         24/60</div>
<div class="pr" style="left:7.9px;top:12.05px;">No.   Program name       Comment</div>
<div class="pr" style="left:7.9px;top:17.15px;">15   IRC_STATUS   PC  [Send Status Mess]</div>
<div class="pr" style="left:7.9px;top:22.25px;">16   IRC_STLABEL  PC  [Send Status Mess]</div>
<div class="pr" style="left:7.9px;top:27.35px;">17   LIBFUNC      PC  [LibFunc         ]</div>
<div class="pr" style="left:7.9px;top:32.45px;">18   MAIN         PC  [PRINCIPAL       ]</div>
<div class="pr" style="left:7.9px;top:37.55px;">19   MAINTENANCE      [                ]</div>
<div class="pr" style="left:7.9px;top:42.65px;">20   PRIO_ALM     VR  [                ]</div>
<div class="pr" style="left:7.9px;top:47.75px;">21   PRACT10      PC  [Practice 10     ]</div>
<div class="pr" style="left:7.9px;top:52.85px;">22   PRACT12      PC  [Practice 12     ]</div>
<div class="pr" style="left:7.9px;top:57.95px;">23   PRACT13      PC  [Practice 13     ]</div>
<div class="abs" style="left:19.3px;top:60.85px;width:30.600px;height:4.700px;background:#111"></div>
<div class="pr" style="left:7.9px;top:63.05px;">24</div>
<div class="pr" style="left:19.7px;top:63.05px;color:#fff">PRACT14</div>
<div class="pr" style="left:50.2px;top:63.05px;">PC  [Practice 14     ]</div>
<div class="pr" style="left:7.9px;top:68.15px;">25   PRACT2       PC  [                ]</div>
<div class="pr" style="left:7.9px;top:73.25px;">26   PRACT3       PC  [Practice 3      ]</div>
<div class="pr" style="left:7.9px;top:78.35px;">27   PRACT4       PC  [Practice 4      ]</div>
<div class="pr" style="left:7.9px;top:83.45px;">28   PRACT6       PC  [Practice 6      ]</div>
<div class="pr" style="left:7.9px;top:88.55px;">29   PRACT8       PC  [Practice 8      ]</div>
<div class="pr" style="left:7.9px;top:93.65px;">30   PRACT9       PC  [Practice 9      ]</div>
<div class="pr" style="left:7.9px;top:98.75px;">31   REQMENU      MR  [Request PC Menu ]</div>
<div class="pr" style="left:7.9px;top:103.85px;">32   SAFE_POSITION    [                ]</div>
<div class="pr" style="left:7.9px;top:108.95px;">33   SENDDATA     MR  [Send PC Data    ]</div>
<div class="pr" style="left:7.9px;top:114.05px;">34   SENDEVNT     MR  [Send PC Event   ]</div>
<div class="pr" style="left:7.9px;top:119.15px;">PRACT14 is selected</div>
</div>
<div class="pp" style="left:113.400px;width:112.600px"><div class="ph">I/O Digital Out</div>
<div class="pr" style="left:12.5px;top:6.95px;">    #   SIM STATUS            114/8192</div>
<div class="abs" style="left:41.2px;top:9.6px;width:11.600px;height:107.500px;background:#ea2222"></div>
<div class="pr" style="left:12.5px;top:12.05px;">DO[ 95] U</div>
<div class="pr" style="left:43.1px;top:12.05px;color:#8e0f0f">OFF</div>
<div class="pr" style="left:57.2px;top:12.05px;">[                ]</div>
<div class="pr" style="left:12.5px;top:17.15px;">DO[ 96] U</div>
<div class="pr" style="left:43.1px;top:17.15px;color:#8e0f0f">OFF</div>
<div class="pr" style="left:57.2px;top:17.15px;">[                ]</div>
<div class="pr" style="left:12.5px;top:22.25px;">DO[ 97] U</div>
<div class="pr" style="left:43.1px;top:22.25px;color:#8e0f0f">OFF</div>
<div class="pr" style="left:57.2px;top:22.25px;">[                ]</div>
<div class="pr" style="left:12.5px;top:27.35px;">DO[ 98] U</div>
<div class="pr" style="left:43.1px;top:27.35px;color:#8e0f0f">OFF</div>
<div class="pr" style="left:57.2px;top:27.35px;">[                ]</div>
<div class="pr" style="left:12.5px;top:32.45px;">DO[ 99] U</div>
<div class="pr" style="left:43.1px;top:32.45px;color:#8e0f0f">OFF</div>
<div class="pr" style="left:57.2px;top:32.45px;">[                ]</div>
<div class="pr" style="left:12.5px;top:37.55px;">DO[100] U</div>
<div class="pr" style="left:43.1px;top:37.55px;color:#8e0f0f">OFF</div>
<div class="pr" style="left:57.2px;top:37.55px;">[Chain Stop      ]</div>
<div class="abs" style="left:41.2px;top:40.40px;width:11.600px;height:4.800px;background:#1fa446"></div>
<div class="pr" style="left:12.5px;top:42.65px;">DO[101] U</div>
<div class="pr" style="left:43.1px;top:42.65px;color:#0a4a1c">ON</div>
<div class="pr" style="left:57.2px;top:42.65px;">[Manual Mode     ]</div>
<div class="pr" style="left:12.5px;top:47.75px;">DO[102] U</div>
<div class="pr" style="left:43.1px;top:47.75px;color:#8e0f0f">OFF</div>
<div class="pr" style="left:57.2px;top:47.75px;">[Auto Mode       ]</div>
<div class="pr" style="left:12.5px;top:52.85px;">DO[103] U</div>
<div class="pr" style="left:43.1px;top:52.85px;color:#8e0f0f">OFF</div>
<div class="pr" style="left:57.2px;top:52.85px;">[Auto Controller ]</div>
<div class="pr" style="left:12.5px;top:57.95px;">DO[104] U</div>
<div class="pr" style="left:43.1px;top:57.95px;color:#8e0f0f">OFF</div>
<div class="pr" style="left:57.2px;top:57.95px;">[Manual Controlle]</div>
<div class="pr" style="left:12.5px;top:63.05px;">DO[105] U</div>
<div class="pr" style="left:43.1px;top:63.05px;color:#8e0f0f">OFF</div>
<div class="pr" style="left:57.2px;top:63.05px;">[                ]</div>
<div class="pr" style="left:12.5px;top:68.15px;">DO[106] U</div>
<div class="pr" style="left:43.1px;top:68.15px;color:#8e0f0f">OFF</div>
<div class="pr" style="left:57.2px;top:68.15px;">[                ]</div>
<div class="pr" style="left:12.5px;top:73.25px;">DO[107] U</div>
<div class="pr" style="left:43.1px;top:73.25px;color:#8e0f0f">OFF</div>
<div class="pr" style="left:57.2px;top:73.25px;">[                ]</div>
<div class="pr" style="left:12.5px;top:78.35px;">DO[108] U</div>
<div class="pr" style="left:43.1px;top:78.35px;color:#8e0f0f">OFF</div>
<div class="pr" style="left:57.2px;top:78.35px;">[                ]</div>
<div class="pr" style="left:12.5px;top:83.45px;">DO[109] U</div>
<div class="pr" style="left:43.1px;top:83.45px;color:#8e0f0f">OFF</div>
<div class="pr" style="left:57.2px;top:83.45px;">[                ]</div>
<div class="pr" style="left:12.5px;top:88.55px;">DO[110] U</div>
<div class="pr" style="left:43.1px;top:88.55px;color:#8e0f0f">OFF</div>
<div class="pr" style="left:57.2px;top:88.55px;">[Green Light     ]</div>
<div class="pr" style="left:12.5px;top:93.65px;">DO[111] U</div>
<div class="pr" style="left:43.1px;top:93.65px;color:#8e0f0f">OFF</div>
<div class="pr" style="left:57.2px;top:93.65px;">[Yellow Light    ]</div>
<div class="pr" style="left:12.5px;top:98.75px;">DO[112] U</div>
<div class="pr" style="left:43.1px;top:98.75px;color:#8e0f0f">OFF</div>
<div class="pr" style="left:57.2px;top:98.75px;">[Red Light       ]</div>
<div class="pr" style="left:12.5px;top:103.85px;">DO[113] U</div>
<div class="pr" style="left:43.1px;top:103.85px;color:#8e0f0f">OFF</div>
<div class="pr" style="left:57.2px;top:103.85px;">[Buzzer          ]</div>
<div class="abs" style="left:41.2px;top:106.70px;width:11.600px;height:4.800px;background:#0c0c0c"></div>
<div class="pr" style="left:12.5px;top:108.95px;">DO[114] U</div>
<div class="pr" style="left:43.1px;top:108.95px;color:#fff">OFF</div>
<div class="pr" style="left:57.2px;top:108.95px;">[PB Dry Cycle    ]</div>
<div class="pr" style="left:12.5px;top:114.05px;">DO[115] U</div>
<div class="pr" style="left:43.1px;top:114.05px;color:#8e0f0f">OFF</div>
<div class="pr" style="left:57.2px;top:114.05px;">[Indicator Dry Cy]</div>
</div>
<div class="abs" style="left:0;top:150px;width:227px;height:17.400px;background:#0c0c0c">
<div class="sk" style="left:-0.7px;width:31.0px"></div>
<div class="sk" style="left:31.5px;width:30.5px"><span style="letter-spacing:.45px">[ TYPE ]</span></div>
<div class="sk" style="left:63.2px;width:31.5px">CREATE</div>
<div class="sk" style="left:95.9px;width:31.1px">DELETE</div>
<div class="sk" style="left:128.2px;width:30.5px">MONITOR</div>
<div class="sk" style="left:159.9px;width:30.4px">[ATTR ]</div>
<div class="sk" style="left:191.5px;width:33.9px"></div>
<svg class="abs" style="left:10.8px;top:5.300px" width="8" height="8" viewBox="0 0 8 8"><rect x="0.00" y="0.00" width="1.750" height="1.750" fill="#f2f2f2"/><rect x="0.00" y="2.60" width="1.750" height="1.750" fill="#f2f2f2"/><rect x="0.00" y="5.20" width="1.750" height="1.750" fill="#f2f2f2"/><rect x="2.60" y="0.00" width="1.750" height="1.750" fill="#f2f2f2"/><rect x="2.60" y="2.60" width="1.750" height="1.750" fill="#f2f2f2"/><rect x="2.60" y="5.20" width="1.750" height="1.750" fill="#f2f2f2"/><rect x="5.20" y="0.00" width="1.750" height="1.750" fill="#f2f2f2"/><rect x="5.20" y="2.60" width="1.750" height="1.750" fill="#f2f2f2"/><rect x="5.20" y="5.20" width="1.750" height="1.750" fill="#f2f2f2"/></svg>
<div class="abs" style="left:204.1px;top:5.300px;width:5px;height:5px;border-right:.9px solid #eee;border-top:.9px solid #eee;transform:rotate(45deg)"></div>
</div>
<div class="abs" style="left:-1px;top:168.300px;width:229px;height:2.500px;background:#ecebd0"></div>
</div>
<div class="key kw" style="left:49.5px;top:187.5px;height:9.300px">PREV</div>
<div class="key kb" style="left:66.1px;top:187.5px;height:11.400px;width:12.200px;left:65.8px;top:185.9px">SHIFT</div>
<div class="key kw" style="left:80.5px;top:187.5px;height:9.300px">MENU</div>
<div class="key kw" style="left:94.8px;top:187.5px;height:9.300px">SELECT</div>
<div class="key kw" style="left:109.3px;top:187.5px;height:9.300px">EDIT</div>
<div class="key kw" style="left:123.4px;top:187.5px;height:9.300px">DATA</div>
<div class="key kw" style="left:137.8px;top:187.5px;height:9.300px">FCTN</div>
<div class="key kb" style="left:152.1px;top:187.5px;height:11.400px;width:12.200px;left:151.8px;top:185.9px">SHIFT</div>
<div class="key kw" style="left:168.8px;top:187.5px;height:9.300px">NEXT</div>
<div class="key kw" style="left:66.1px;top:198.9px;"><i style="font-family:'Liberation Serif',serif;font-size:4.500px">i</i></div>
<div class="key kl" style="left:123.4px;top:198.9px;">STEP</div>
<div class="key kb" style="left:137.8px;top:198.9px;">-X<br>(J1)</div>
<div class="key kb" style="left:152.1px;top:198.9px;">+X<br>(J1)</div>
<div class="key kl" style="left:66.1px;top:209.5px;">DISP<br>▭</div>
<div class="key kw" style="left:123.4px;top:209.5px;">HOLD</div>
<div class="key kb" style="left:137.8px;top:209.5px;">-Y<br>(J2)</div>
<div class="key kb" style="left:152.1px;top:209.5px;">+Y<br>(J2)</div>
<div class="key kw" style="left:66.1px;top:220.1px;">RESET</div>
<div class="key kd" style="left:80.5px;top:220.1px;">BACK<br>SPACE</div>
<div class="key kd" style="left:94.8px;top:220.1px;">ITEM</div>
<div class="key kd" style="left:109.3px;top:220.1px;">ENTER</div>
<div class="key kw" style="left:123.4px;top:220.1px;">FWD</div>
<div class="key kb" style="left:137.8px;top:220.1px;">-Z<br>(J3)</div>
<div class="key kb" style="left:152.1px;top:220.1px;">+Z<br>(J3)</div>
<div class="key kd" style="left:66.1px;top:230.9px;font-size:5px;line-height:5px">7</div>
<div class="key kd" style="left:80.5px;top:230.9px;font-size:5px;line-height:5px">8</div>
<div class="key kd" style="left:94.8px;top:230.9px;font-size:5px;line-height:5px">9</div>
<div class="key kl" style="left:109.3px;top:230.9px;">TOOL<br>1</div>
<div class="key kw" style="left:123.4px;top:230.9px;">BWD</div>
<div class="key kb" style="left:137.8px;top:230.9px;">-X<br>(J4)</div>
<div class="key kb" style="left:152.1px;top:230.9px;">+X<br>(J4)</div>
<div class="key kd" style="left:66.1px;top:241.4px;font-size:5px;line-height:5px">4</div>
<div class="key kd" style="left:80.5px;top:241.4px;font-size:5px;line-height:5px">5</div>
<div class="key kd" style="left:94.8px;top:241.4px;font-size:5px;line-height:5px">6</div>
<div class="key kl" style="left:109.3px;top:241.4px;">TOOL<br>2</div>
<div class="key kl" style="left:123.4px;top:241.4px;">COORD</div>
<div class="key kb" style="left:137.8px;top:241.4px;">-Y<br>(J5)</div>
<div class="key kb" style="left:152.1px;top:241.4px;">+Y<br>(J5)</div>
<div class="key kd" style="left:66.1px;top:251.8px;font-size:5px;line-height:5px">1</div>
<div class="key kd" style="left:80.5px;top:251.8px;font-size:5px;line-height:5px">2</div>
<div class="key kd" style="left:94.8px;top:251.8px;font-size:5px;line-height:5px">3</div>
<div class="key kd" style="left:109.3px;top:251.8px;">MOVE<br>MENU</div>
<div class="key kl" style="left:123.4px;top:251.8px;">GROUP</div>
<div class="key kb" style="left:137.8px;top:251.8px;">-Z<br>(J6)</div>
<div class="key kb" style="left:152.1px;top:251.8px;">+Z<br>(J6)</div>
<div class="key kd" style="left:66.1px;top:262.4px;font-size:5px;line-height:5px">0</div>
<div class="key kd" style="left:80.5px;top:262.4px;font-size:5px;line-height:5px">.</div>
<div class="key kd" style="left:94.8px;top:262.4px;">-<br>,</div>
<div class="key kw" style="left:109.3px;top:262.4px;">SET<br>UP</div>
<div class="key kl" style="left:123.4px;top:262.4px;">+%</div>
<div class="key kb" style="left:137.8px;top:262.4px;">-<br>(J7)</div>
<div class="key kb" style="left:152.1px;top:262.4px;">+<br>(J7)</div>
<div class="key kl" style="left:66.1px;top:272.9px;">DIAG<br>HELP</div>
<div class="key kw" style="left:80.5px;top:272.9px;">POSN</div>
<div class="key kw" style="left:94.8px;top:272.9px;">I/O</div>
<div class="key kw" style="left:109.3px;top:272.9px;">STATUS</div>
<div class="key kl" style="left:123.4px;top:272.9px;">-%</div>
<div class="key kb" style="left:137.8px;top:272.9px;">-<br>(J8)</div>
<div class="key kb" style="left:152.1px;top:272.9px;">+<br>(J8)</div>
<div class="key kl" style="left:94.8px;top:196.7px;font-size:5.500px;line-height:6px;color:#16243c;border-color:#3a6ab8;background:linear-gradient(#4a92f2 26%,#f6f6f6 27%)">⇧</div>
<div class="key kl" style="left:80.5px;top:204.5px;font-size:5.500px;line-height:6px;color:#16243c;border-color:#3a6ab8;background:linear-gradient(#4a92f2 26%,#f6f6f6 27%)">⇦</div>
<div class="key kl" style="left:109.3px;top:204.5px;font-size:5.500px;line-height:6px;color:#16243c;border-color:#3a6ab8;background:linear-gradient(#4a92f2 26%,#f6f6f6 27%)">⇨</div>
<div class="key kl" style="left:94.8px;top:209.5px;font-size:5.500px;line-height:6px;color:#16243c;border-color:#3a6ab8;background:linear-gradient(#f6f6f6 72%,#4a92f2 73%)">⇩</div>
<div class="abs" style="left:48.6px;top:209.5px;width:11.400px;height:11px;background:#f2f2f2;border-radius:1.300px;border:.7px solid #333"><div class="abs" style="left:2px;top:.9px;width:6.800px;height:6.800px;border-radius:50%;background:linear-gradient(135deg,#111 48%,#fff 49%,#fff 55%,#111 56%)"></div></div>
<div class="abs" style="left:169.2px;top:234.4px;width:11.400px;height:13.400px;background:#787878;border-radius:1.300px;border:.5px solid #8c8c8c;color:#a8a8a8;font-size:3px;line-height:13px;text-align:center">POSN</div>
</div>
</div>
<div id="chat">
<div class="abs" style="left:.4px;top:0;width:.7px;height:450px;background:#d4d4d4"></div>
<div class="cn" style="top:-7.2px">Alexandro Gómez<span>2:25 PM</span></div>
<div class="av avx" style="top:1.2px"></div>
<div class="cb" style="top:1.2px;width:19.0px">ok</div>
<div class="cn" style="top:26.3px">Alexandro Gómez<span>2:25 PM</span></div>
<div class="av avx" style="top:34.7px"></div>
<div class="cb" style="top:34.7px;width:25.5px">Jalo</div>
<div class="cn" style="top:59.6px">Oliverio Miguel Reyes<span>2:25 PM</span></div>
<div class="av" style="top:68.0px">OM</div>
<div class="cb" style="top:68.0px;width:20.0px">si</div>
<div class="cn" style="top:92.9px">Oliverio Miguel Reyes<span>3:36 PM</span></div>
<div class="av" style="top:101.3px">OM</div>
<div class="cb" style="top:101.3px;width:23.6px">NO</div>
<div class="cn" style="top:126.2px">Oliverio Miguel Reyes<span>3:56 PM</span></div>
<div class="av" style="top:134.6px">OM</div>
<div class="cb" style="top:134.6px;width:20.0px">si</div>
<div class="cn" style="top:159.5px">Oliverio Miguel Reyes<span>4:17 PM</span></div>
<div class="av" style="top:167.9px">OM</div>
<div class="cb" style="top:167.9px;width:23.6px">NO</div>
<div class="cn" style="top:192.8px">Oliverio Miguel Reyes<span>4:49 PM</span></div>
<div class="av" style="top:201.2px">OM</div>
<div class="cb" style="top:201.2px;width:23.6px">NO</div>
<div class="cn" style="top:225.9px">Pedro Daniel Mendoza Garfias<span>4:54 PM</span></div>
<div class="av" style="top:233.900px;border-radius:50%;background:#2d7ccc;color:#cfe3f7;font-size:5.500px;letter-spacing:0">PD</div>
<div class="cb" style="top:233.300px;width:137.500px;height:161.700px;border-radius:6px"></div>
<div class="ml" style="top:238.67px;left:29.8px"><span style="letter-spacing:-.23px">IF($SSR.$SINGLESTEP=0) THEN</span>      -----<i>MODE</i></div>
<div class="ml" style="top:246.32px;left:29.8px"><i>STEP</i></div>
<div class="ml" style="top:253.97px;left:60.3px">DOUT[do_StepOnOff] = FALSE</div>
<div class="ml" style="top:269.27px;left:29.8px">ELSE</div>
<div class="ml" style="top:284.57px;left:60.3px">DOUT[do_StepOnOff] = TRUE</div>
<div class="ml" style="top:299.87px;left:60.3px">--<i>INDICA SI EL ROBOT SE MUEVE</i></div>
<div class="ml" style="top:307.52px;left:60.3px">IF((DOUT[do_PB_Home]) AND</div>
<div class="ml" style="top:315.17px;left:29.8px"><span style="letter-spacing:-.1px">(NOT $MOR_GRP[1].$ROB_MOVE))THEN</span></div>
<div class="ml" style="top:322.82px;left:60.3px">WRITE(CHR(128),CHR(137))</div>
<div class="ml" style="top:330.47px;left:60.3px">$GROUP[1].$UTOOL=</div>
<div class="ml" style="top:338.12px;left:29.8px">$MNUTOOL[1,1]---<i>ESPECIFICA EL UTOOL</i></div>
<div class="ml" style="top:345.77px;left:60.3px">$GROUP[1].$UFRAME=</div>
<div class="ml" style="top:353.42px;left:29.8px">$MNUFRAME[1,0]---<i>ESPECIFICA EL UFRAME</i></div>
<div class="ml" style="top:368.72px;left:60.3px">$MCR.$GENOVERRIDE=68</div>
<div class="ml" style="top:376.37px;left:60.3px">HOME</div>
<div class="ml" style="top:384.02px;left:60.3px">WRITE('ROBOT A HOME',CR)</div>
<svg class="abs" style="left:28px;top:398px" width="34" height="10" viewBox="0 0 34 10"><g fill="none" stroke="#8d8d8d" stroke-width=".7"><path d="M2 2.200h5.500v3.800h-3l-1.500 1.500v-1.500h-1z"/><path d="M7.800 1.300l1.200-.9M8.600 2l1.100-.2" /><circle cx="16.800" cy="4.800" r="2.900"/><path d="M15.300 5.600q1.500 1.500 3 0M19.500 1v2M18.500 2h2"/></g><g fill="#8d8d8d"><circle cx="27" cy="4.800" r=".55"/><circle cx="28.800" cy="4.800" r=".55"/><circle cx="30.600" cy="4.800" r=".55"/></g></svg>
<div class="abs" style="left:1.200px;top:410.200px;width:191.200px;height:12.300px;background:#f0f2fa"></div>
<svg class="abs" style="left:53.500px;top:411.500px" width="10" height="10" viewBox="0 0 10 10"><circle cx="4.200" cy="3.200" r="1.600" fill="none" stroke="#8a8a8a" stroke-width=".7"/><path d="M1.300 8.300c0-3 5.800-3 5.800 0" fill="none" stroke="#8a8a8a" stroke-width=".7"/><circle cx="7.200" cy="7.300" r="1.500" fill="#1a66e8"/></svg>
<div class="abs nw" style="left:63.700px;top:413.300px;font-size:5.800px;line-height:8px;color:#7c7c7c">Who can see your messages?</div>
<div class="abs nw" style="left:6.700px;top:426.600px;font-size:7.500px;line-height:10px;color:#7a7a7a">Message everyone</div>
<div class="abs" style="left:187px;top:10.700px;width:4.400px;height:300px;background:#f3f4fa"></div>
<div class="abs" style="left:194.800px;top:0;width:2.200px;height:450px;background:#2f2f2f"></div>
<div class="abs" style="left:187.100px;top:311.700px;width:3.700px;height:97.600px;border-radius:1.800px;background:#8f8f97"></div>
<div class="abs" style="left:1.200px;top:0;width:195.800px;height:10.700px;background:#f7f7fa"></div>
<div class="abs" style="left:6.600px;top:-8.400px;width:16.400px;height:16.400px;border-radius:3.600px;background:#1d62ee"><div class="abs" style="left:4.700px;top:6.500px;width:7px;height:5.500px;border:.9px solid #dfe9fd;border-top:0;border-radius:0 0 1.800px 1.800px"></div></div>
<div class="abs nw" style="left:27px;top:-2.700px;font-size:6.750px;line-height:9px;font-weight:bold;color:#1f1f1f">Introducción y Programación de Rob...</div>
<div class="abs nw" style="left:155.500px;top:-2.300px;font-size:7px;line-height:8px;color:#777;letter-spacing:.4px">···</div>
<div class="abs" style="left:167.500px;top:-1.600px;width:5.500px;height:5.500px;border:.7px solid #777;border-radius:1.200px"></div>
<div class="abs nw" style="left:180.300px;top:-1.800px;font-size:7px;line-height:8px;color:#777">✕</div>
</div>
</div></body></html>
